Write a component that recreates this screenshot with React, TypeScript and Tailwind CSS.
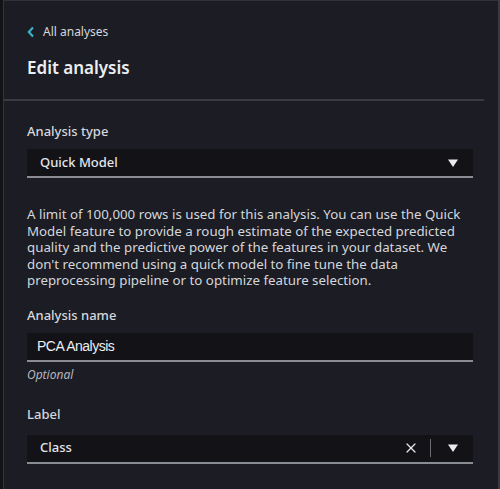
import { X } from "lucide-react";

function Caret() {
  return (
    <svg width="12" height="10" viewBox="0 0 12 10" className="shrink-0">
      <path d="M1 1.5h10L6 9z" fill="#e9ebed" />
    </svg>
  );
}

export default function App() {
  return (
    <div
      className="w-[500px] h-[489px] bg-[#16161c] flex overflow-hidden text-[#d5d7db]"
      style={{ fontFamily: '"Noto Sans", "Open Sans", sans-serif' }}
    >
      <div className="w-[3px] shrink-0 bg-[#121217]" />
      <div className="w-[1px] shrink-0 bg-[#33343c]" />
      <div className="flex-1 flex flex-col bg-[#1b1c24] border-t border-[#2f3038]">
        {/* header */}
        <div className="pr-[14px]">
          <div className="pl-[23px] pt-[22px] pb-[19px] border-b-2 border-[#393a43]">
            <a className="flex items-center gap-[8px] text-[12px] leading-[18px] text-[#d5d7db]">
              <svg width="8" height="12" viewBox="0 0 8 12">
                <path d="M6 1.5L1.8 6 6 10.5" stroke="#3bb3c8" strokeWidth="2.2" fill="none" />
              </svg>
              All analyses
            </a>
            <h1 className="mt-[15px] text-[17px] leading-[24px] font-semibold text-[#eceef1]">Edit analysis</h1>
          </div>
        </div>

        {/* form */}
        <div className="pl-[23px] pr-[25px] pt-[21px] flex flex-col">
          <label className="text-[13px] leading-[18px] font-medium text-[#d5d7db]">Analysis type</label>
          <div className="mt-[9px] h-[29px] bg-[#121217] border-b-2 border-[#8a8c93] rounded-t-[2px] flex items-center pl-[13px] pr-[14px]">
            <span className="flex-1 text-[13px] font-medium text-[#e4e6e9]">Quick Model</span>
            <Caret />
          </div>

          <p className="mt-[28px] text-[13.3px] leading-[16.5px] text-[#d5d7db]">
            A limit of 100,000 rows is used for this analysis. You can use the Quick Model feature to provide a rough
            estimate of the expected predicted quality and the predictive power of the features in your dataset. We
            don't recommend using a quick model to fine tune the data preprocessing pipeline or to optimize feature
            selection.
          </p>

          <label className="mt-[17px] text-[13px] leading-[18px] font-medium text-[#d5d7db]">Analysis name</label>
          <div className="mt-[9px] h-[29px] bg-[#121217] border-b-2 border-[#8a8c93] rounded-t-[2px] flex items-center pl-[10px]">
            <span
              className="text-[14px] tracking-[-0.5px] text-[#eceef1]"
              style={{ fontFamily: '"Liberation Sans", Arial, sans-serif' }}
            >
              PCA Analysis
            </span>
          </div>
          <span className="mt-[5px] text-[12px] leading-[16px] italic text-[#b4b6bc]">Optional</span>

          <label className="mt-[22px] text-[13px] leading-[18px] font-medium text-[#d5d7db]">Label</label>
          <div className="mt-[12px] h-[29px] bg-[#121217] border-b-2 border-[#8a8c93] rounded-t-[2px] flex items-center pl-[13px] pr-[14px]">
            <span className="flex-1 text-[13px] font-medium text-[#e4e6e9]">Class</span>
            <X size={16} strokeWidth={1.8} color="#e9ebed" />
            <div className="w-[1px] h-[18px] bg-[#6b6d74] ml-[11px] mr-[16px]" />
            <Caret />
          </div>
        </div>
      </div>
      <div className="w-[2px] shrink-0 bg-[#3a3b43]" />
    </div>
  );
}
